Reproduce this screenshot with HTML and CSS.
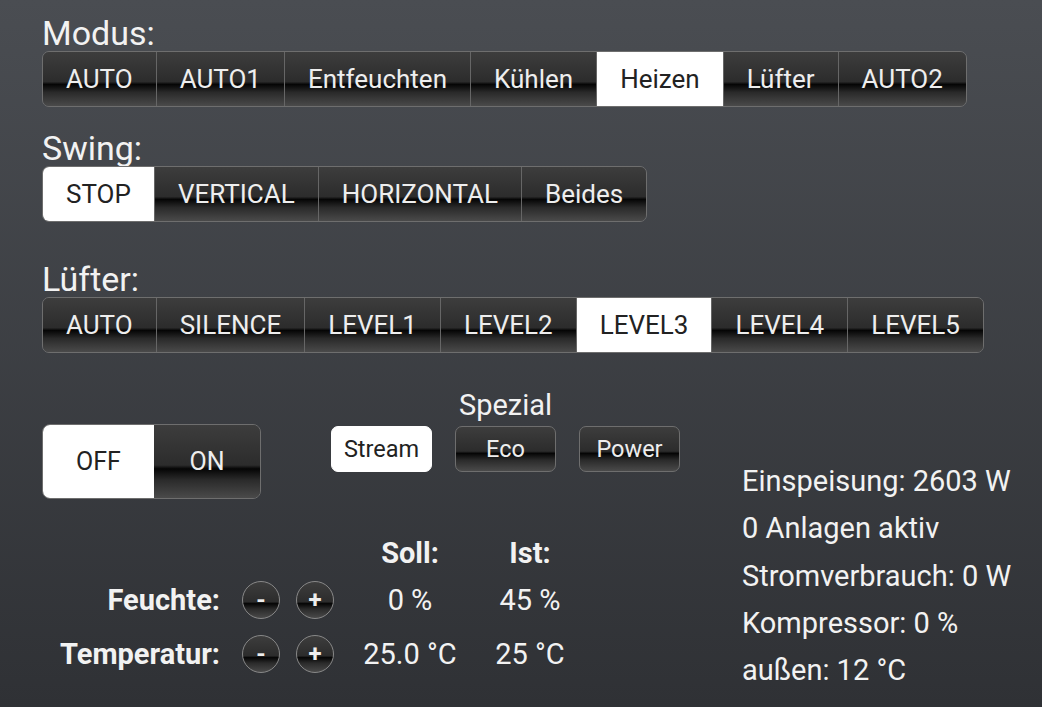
FILE: index.html
```html
<!DOCTYPE html>
<html lang="de">
<head>
    <meta charset="UTF-8">
    <meta name="viewport" content="width=device-width, initial-scale=1.0">
    <title>Klima</title>
    <link rel="stylesheet" href="styles.css">
</head>
<body>
    <div class="page">
        <div class="label">Modus:</div>
        <div class="segbar">
            <button class="seg">AUTO</button>
            <button class="seg">AUTO1</button>
            <button class="seg">Entfeuchten</button>
            <button class="seg">Kühlen</button>
            <button class="seg active">Heizen</button>
            <button class="seg">Lüfter</button>
            <button class="seg">AUTO2</button>
        </div>

        <div class="label label-gap">Swing:</div>
        <div class="segbar">
            <button class="seg active">STOP</button>
            <button class="seg">VERTICAL</button>
            <button class="seg">HORIZONTAL</button>
            <button class="seg">Beides</button>
        </div>

        <div class="label label-gap-wide">Lüfter:</div>
        <div class="segbar">
            <button class="seg">AUTO</button>
            <button class="seg">SILENCE</button>
            <button class="seg">LEVEL1</button>
            <button class="seg">LEVEL2</button>
            <button class="seg active">LEVEL3</button>
            <button class="seg">LEVEL4</button>
            <button class="seg">LEVEL5</button>
        </div>

        <div class="lower">
            <div class="lower-left">
                <div class="controls">
                    <div class="toggle">
                        <button class="tog active">OFF</button>
                        <button class="tog">ON</button>
                    </div>
                    <div class="spezial">
                        <div class="spezial-title">Spezial</div>
                        <div class="spezial-btns">
                            <button class="pill active">Stream</button>
                            <button class="pill">Eco</button>
                            <button class="pill">Power</button>
                        </div>
                    </div>
                </div>

                <div class="values">
                    <div></div><div></div><div></div>
                    <div class="head">Soll:</div>
                    <div class="head">Ist:</div>

                    <div class="name">Feuchte:</div>
                    <button class="round">-</button>
                    <button class="round">+</button>
                    <div class="val">0 %</div>
                    <div class="val">45 %</div>

                    <div class="name">Temperatur:</div>
                    <button class="round">-</button>
                    <button class="round">+</button>
                    <div class="val">25.0 °C</div>
                    <div class="val">25 °C</div>
                </div>
            </div>

            <div class="info">
                <div>Einspeisung: 2603 W</div>
                <div>0 Anlagen aktiv</div>
                <div>Stromverbrauch: 0 W</div>
                <div>Kompressor: 0 %</div>
                <div>außen: 12 °C</div>
            </div>
        </div>
    </div>
</body>
</html>
```

FILE: styles.css
```css
html, body {
    margin: 0;
    height: 100%;
}
body {
    font-family: Roboto, "Liberation Sans", sans-serif;
    color: #f2f2f2;
    background: linear-gradient(#4a4d52, #2f3135);
    overflow: hidden;
}
button {
    font-family: inherit;
    cursor: pointer;
}
.page {
    padding: 16px 0 0 42px;
}
.label {
    font-size: 34px;
    line-height: 35px;
}
.label-gap {
    margin-top: 24px;
}
.label-gap-wide {
    margin-top: 40px;
}

/* glossy dark button look */
.seg, .tog, .pill, .round {
    color: #eee;
    background: linear-gradient(#3d3d3d 0%, #2c2c2c 55%, #050505 60%, #2a2a2a 75%, #4a4a4a 100%);
    border: none;
}
.seg.active, .tog.active, .pill.active {
    background: #fff;
    color: #222;
}

.segbar {
    display: inline-flex;
    height: 56px;
    border: 1px solid #6e6e6e;
    border-radius: 7px;
    overflow: hidden;
    box-sizing: border-box;
}
.seg {
    font-size: 26px;
    padding: 0 23px;
    border-left: 1px solid #666;
}
.seg:first-child {
    border-left: none;
}

.lower {
    display: flex;
    margin-top: 36px;
}
.lower-left {
    width: 700px;
}
.controls {
    display: flex;
    align-items: flex-start;
}
.toggle {
    display: flex;
    margin-top: 35px;
    width: 219px;
    height: 75px;
    border: 1px solid #6e6e6e;
    border-radius: 8px;
    overflow: hidden;
    box-sizing: border-box;
}
.tog {
    font-size: 25px;
    width: 111px;
    padding: 0;
}
.tog + .tog {
    flex: 1;
}
.spezial {
    margin-left: 70px;
}
.spezial-title {
    font-size: 29px;
    line-height: 32px;
    text-align: center;
    margin-bottom: 5px;
}
.spezial-btns {
    display: flex;
    gap: 23px;
}
.pill {
    width: 101px;
    height: 46px;
    font-size: 23.5px;
    border: 1px solid #6e6e6e;
    border-radius: 7px;
    padding: 0;
}
.pill.active {
    border-color: #fff;
}

.values {
    display: grid;
    grid-template-columns: 178px 60px 54px 152px 88px;
    grid-template-rows: 46px 48px 60px;
    align-items: center;
    margin-top: 31px;
    font-size: 29px;
}
.head {
    font-weight: bold;
    text-align: center;
}
.name {
    font-weight: bold;
    justify-self: end;
}
.val {
    text-align: center;
}
.round {
    justify-self: end;
    width: 38px;
    height: 38px;
    border: 1px solid #888;
    border-radius: 50%;
    font-size: 24px;
    font-weight: bold;
    padding: 0;
    line-height: 34px;
}

.info {
    margin-top: 69px;
    font-size: 29px;
    line-height: 47.3px;
}
```
